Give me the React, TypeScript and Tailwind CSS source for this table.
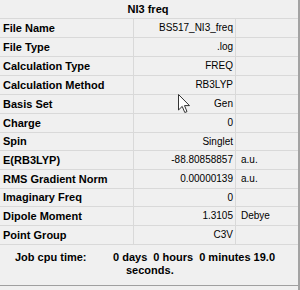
import React from "react";

const rows: { label: string; value: string; unit: string; h: string }[] = [
  { label: "File Name", value: "BS517_NI3_freq", unit: "", h: "h-[19px]" },
  { label: "File Type", value: ".log", unit: "", h: "h-[19px]" },
  { label: "Calculation Type", value: "FREQ", unit: "", h: "h-[19px]" },
  { label: "Calculation Method", value: "RB3LYP", unit: "", h: "h-[19px]" },
  { label: "Basis Set", value: "Gen", unit: "", h: "h-[19px]" },
  { label: "Charge", value: "0", unit: "", h: "h-[19px]" },
  { label: "Spin", value: "Singlet", unit: "", h: "h-[18px]" },
  { label: "E(RB3LYP)", value: "-88.80858857", unit: "a.u.", h: "h-[19px]" },
  { label: "RMS Gradient Norm", value: "0.00000139", unit: "a.u.", h: "h-[19px]" },
  { label: "Imaginary Freq", value: "0", unit: "", h: "h-[18px]" },
  { label: "Dipole Moment", value: "1.3105", unit: "Debye", h: "h-[19px]" },
  { label: "Point Group", value: "C3V", unit: "", h: "h-[19px]" },
];

export default function App() {
  return (
    <div className="relative w-[300px] h-[290px] bg-[#f0f0f0] text-black font-['Liberation_Sans',Arial,sans-serif] border-r-2 border-[#a3a3a3] overflow-hidden">
      <div className="flex flex-col h-[286px] border-b border-[#a0a0a0]">
        <div className="h-[18px] flex items-center justify-center text-[11px] font-bold leading-none pr-[2px]">
          NI3 freq
        </div>
        <div className="border-b border-[#d9d9d9]">
          {rows.map((r) => (
            <div
              key={r.label}
              className={`${r.h} grid grid-cols-[133px_102px_63px] border-t border-[#d9d9d9]`}
            >
              <div className="flex items-center pl-[3px] text-[11px] font-bold leading-none whitespace-nowrap">
                {r.label}
              </div>
              <div className="flex items-center justify-end pr-[2px] border-l border-[#d9d9d9] text-[10px] leading-none whitespace-nowrap">
                {r.value}
              </div>
              <div className="flex items-center pl-[5px] border-l border-[#d9d9d9] text-[10px] leading-none whitespace-nowrap">
                {r.unit}
              </div>
            </div>
          ))}
        </div>
        <div className="flex-1 flex pt-[6px] text-[11px] font-bold leading-[13px]">
          <div className="pl-[15px] w-[113px] whitespace-pre">Job cpu time:</div>
          <div className="flex flex-col whitespace-pre">
            <span>0 days  0 hours  0 minutes 19.0</span>
            <span className="pl-[13px]">seconds.</span>
          </div>
        </div>
      </div>
      <svg
        className="absolute left-[178px] top-[94px]"
        width="13"
        height="20"
        viewBox="0 0 13 20"
      >
        <path
          d="M0.5 0.5 L0.5 16 L4.2 12.4 L6.8 18.5 L9 17.6 L6.5 11.6 L11.5 11.6 Z"
          fill="#ffffff"
          stroke="#333333"
          strokeWidth="1"
          strokeLinejoin="miter"
        />
      </svg>
    </div>
  );
}
